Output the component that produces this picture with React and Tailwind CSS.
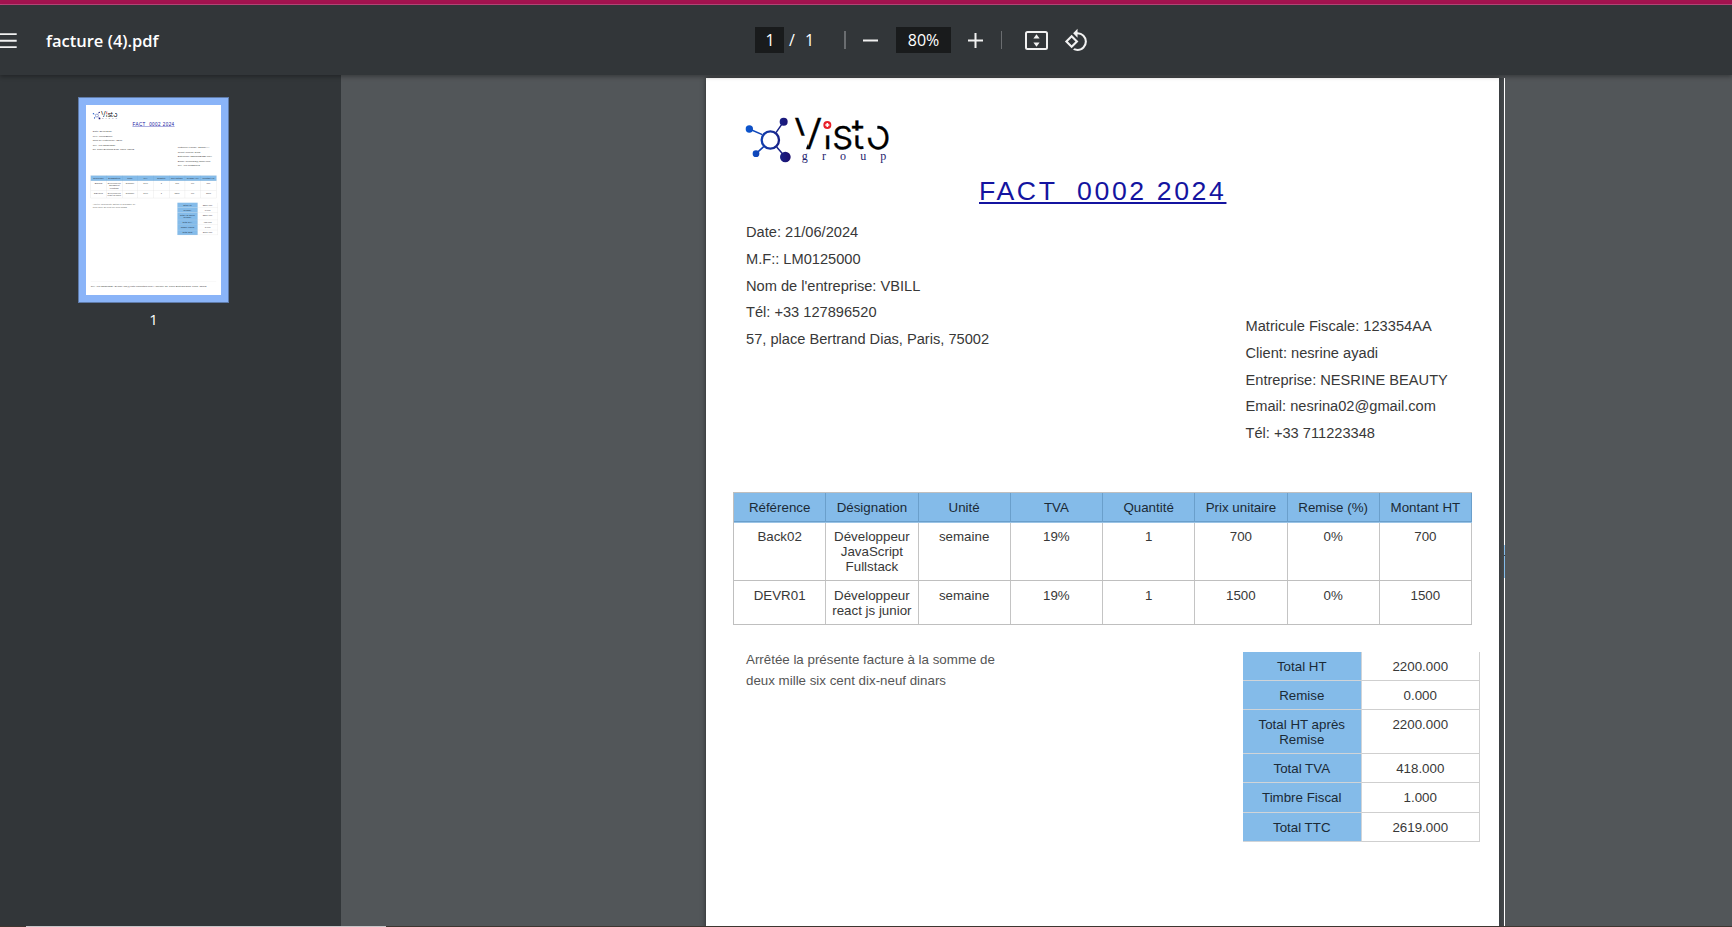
import React from "react";

const HEADERS = ["Référence", "Désignation", "Unité", "TVA", "Quantité", "Prix unitaire", "Remise (%)", "Montant HT"];
const ROWS = [
  ["Back02", "Développeur JavaScript Fullstack", "semaine", "19%", "1", "700", "0%", "700"],
  ["DEVR01", "Développeur react js junior", "semaine", "19%", "1", "1500", "0%", "1500"],
];
const TOTALS = [
  ["Total HT", "2200.000", "h-[29px]"],
  ["Remise", "0.000", "h-[29px]"],
  ["Total HT après Remise", "2200.000", "h-[44px]"],
  ["Total TVA", "418.000", "h-[29px]"],
  ["Timbre Fiscal", "1.000", "h-[30px]"],
  ["Total TTC", "2619.000", "h-[29px]"],
];

function Logo() {
  return (
    <svg className="block h-[50px] w-[150px] overflow-visible" viewBox="130 135 450 150">
      <defs>
        <linearGradient id="net" x1="138" y1="0" x2="272" y2="0" gradientUnits="userSpaceOnUse">
          <stop offset="0" stopColor="#0b57d0" />
          <stop offset="1" stopColor="#1d0f6e" />
        </linearGradient>
      </defs>
      <g transform="translate(1 0)">
        <g stroke="url(#net)" strokeWidth="4.5" fill="none">
          <path d="M148 177L187 194M168 251L191 230M251 155L228 188M256 261L230 231" />
          <circle cx="211" cy="210" r="26" strokeWidth="7" />
        </g>
        <g fill="url(#net)">
          <circle cx="148" cy="177" r="11" />
          <circle cx="168" cy="251" r="10" />
          <circle cx="251" cy="155" r="12" />
          <circle cx="256" cy="261" r="16" />
        </g>
      </g>
      <text x="283 369 396 456 498" y="237" fontFamily="Inter, sans-serif" fontWeight="300" fontSize="126" fill="#000" stroke="#000" strokeWidth="1">Visto</text>
      <g fill="#fff">
        <path d="M294 197H334L317 241H294Z" />
        <path d="M372 138H394V196H372Z" />
        <path d="M464 182H490V196H464Z" />
        <path d="M497 158H533V203H497Z" />
      </g>
      <circle cx="383" cy="165" r="12" fill="#e8202a" />
      <path d="M377 165H389M383 159V171" stroke="#fff" strokeWidth="5" />
      <text x="306 367 421 482 542" y="270" fontFamily="Liberation Serif, serif" fontSize="36" fill="#24246e">group</text>
    </svg>
  );
}

function Invoice() {
  return (
    <div className="flex h-[1120px] w-[793px] flex-col bg-white font-['Liberation_Sans',Arial,sans-serif] text-[13.33px] text-[#383838]">
      <div className="pl-[37px] pt-[37px]"><Logo /></div>
      <div className="pl-[273px] pt-[8px]">
        <h1 className="w-fit whitespace-pre text-[26.67px] leading-[36px] tracking-[2.6px] text-[#1414a0] underline decoration-[1.6px] underline-offset-[2px] [text-decoration-skip-ink:none]">{"FACT  0002 2024"}</h1>
      </div>
      <div className="flex h-[279px] justify-between pl-[40px] pr-[50px] pt-[10px] text-[14.64px] leading-[26.8px]">
        <div>
          <p>Date: 21/06/2024</p>
          <p>M.F:: LM0125000</p>
          <p>Nom de l'entreprise: VBILL</p>
          <p>Tél: +33 127896520</p>
          <p>57, place Bertrand Dias, Paris, 75002</p>
        </div>
        <div className="w-[203.5px] whitespace-nowrap pt-[94px]">
          <p>Matricule Fiscale: 123354AA</p>
          <p>Client: nesrine ayadi</p>
          <p>Entreprise: NESRINE BEAUTY</p>
          <p>Email: nesrina02@gmail.com</p>
          <p>Tél: +33 711223348</p>
        </div>
      </div>
      <div className="ml-[27px] mt-[4px] w-[739px] border-l border-t border-[#bfbfbf] text-center leading-[15px]">
        <div className="grid h-[30px] grid-cols-8 border-b border-[#9bc4e6] bg-[#84bbe9] text-[#1b2a36]">
          {HEADERS.map((h) => (
            <div key={h} className="whitespace-nowrap border-b border-r border-[#6a9fcb] pt-[7px]">{h}</div>
          ))}
        </div>
        <div className="grid h-[58px] grid-cols-8 border-b border-[#bfbfbf]">
          {ROWS[0].map((c, j) => (
            <div key={j} className="border-r border-[#c4c4c4] px-[6px] pt-[6px]">{c}</div>
          ))}
        </div>
        <div className="grid h-[44px] grid-cols-8 border-b border-[#bfbfbf]">
          {ROWS[1].map((c, j) => (
            <div key={j} className="border-r border-[#c4c4c4] px-[6px] pt-[7px]">{c}</div>
          ))}
        </div>
      </div>
      <div className="flex justify-between pl-[40px] pr-[19px] pt-[27px]">
        <div className="-mt-[3px] w-[260px] whitespace-nowrap leading-[21.3px] text-[#555]">
          <p>Arrêtée la présente facture à la somme de</p>
          <p>deux mille six cent dix-neuf dinars</p>
        </div>
        <div className="w-[237px] text-center leading-[15px]">
          {TOTALS.map(([a, b, h]) => (
            <div key={a} className={"grid grid-cols-2 " + h}>
              <div className="border-b border-r border-[#d0d4d8] bg-[#84bbe9] px-3 pt-[7px] text-[#1b2a36]">{a}</div>
              <div className="border-b border-r border-[#cfcfcf] pt-[7px]">{b}</div>
            </div>
          ))}
        </div>
      </div>
      <div className="mx-[28px] mt-auto mb-[44px] whitespace-nowrap border-t border-[#ddd] pt-[18px] text-[14.64px]">
        Tél: +33 127896520 | E-mail: info@visto-consulting.com | Adresse: 57, place Bertrand Dias, Paris, 75002
      </div>
    </div>
  );
}

function Toolbar() {
  return (
    <header className="relative z-10 flex h-[70px] shrink-0 items-center bg-[#323639] text-white shadow-[0_2px_4px_rgba(0,0,0,0.3)]">
      <svg className="h-[20px] w-[17px]" viewBox="0 0 17 20"><path d="M0 4.1H16.7M0 10.7H16.7M0 17.1H16.7" stroke="#f1f1f1" strokeWidth="1.9" /></svg>
      <div className="ml-[29px] w-[709px] pt-[3px] text-[16.5px] font-semibold">facture (4).pdf</div>
      <div className="flex h-[26px] w-[29px] items-center justify-center bg-[#191b1c] pl-px text-[16px]">1</div>
      <div className="ml-[5px] w-[7px] text-[16px]">/</div>
      <div className="ml-[9px] w-[39px] text-[16px]">1</div>
      <div className="h-[18px] w-[2px] bg-[#6a6d70]" />
      <svg className="ml-[17px] h-[15px] w-[15px]" viewBox="0 0 15 15"><path d="M0 7.5H15" stroke="#f1f1f1" strokeWidth="2" /></svg>
      <div className="ml-[18px] flex h-[26px] w-[55px] items-center justify-center bg-[#191b1c] text-[16px]">80%</div>
      <svg className="ml-[17px] h-[15px] w-[15px]" viewBox="0 0 15 15"><path d="M0 7.5H15M7.5 0V15" stroke="#f1f1f1" strokeWidth="2" /></svg>
      <div className="ml-[18px] h-[18px] w-px bg-[#6a6d70]" />
      <svg className="ml-[23px] h-[19px] w-[23px]" viewBox="0 0 23 19">
        <rect x="1" y="1" width="21" height="17" rx="1.5" fill="none" stroke="#f1f1f1" strokeWidth="2" />
        <path d="M11.5 3.2L14.6 7.4H8.4ZM11.5 15.8L14.6 11.6H8.4Z" fill="#f1f1f1" />
      </svg>
      <svg className="ml-[16px] h-[25px] w-[25px]" viewBox="0 0 24 24" fill="#f1f1f1">
        <path d="M7.34 6.41L.86 12.9l6.49 6.48 6.49-6.48-6.5-6.49zM3.69 12.9l3.66-3.66L11 12.9l-3.66 3.66-3.65-3.66zm15.67-6.26A8.95 8.95 0 0 0 13 4V.76L8.76 5 13 9.24V6c1.79 0 3.58.68 4.95 2.05a7.007 7.007 0 0 1 0 9.9 6.973 6.973 0 0 1-7.79 1.44l-1.49 1.49C10.02 21.62 11.51 22 13 22c2.3 0 4.61-.88 6.36-2.64a8.98 8.98 0 0 0 0-12.72z" />
      </svg>
    </header>
  );
}

export default function App() {
  return (
    <div className="flex h-[927px] w-[1732px] flex-col overflow-hidden bg-[#525659] font-['Open_Sans','Noto_Sans',sans-serif]">
      <div className="h-[5px] shrink-0 border-b border-[#b8477a] bg-[#a3134f]" />
      <Toolbar />
      <div className="flex h-[851px] overflow-hidden">
        <aside className="flex w-[341px] shrink-0 flex-col items-start bg-[#323639] pl-[78px] pt-[22px] text-white">
          <div className="h-[206px] w-[151px] border border-[#5f7ba9] bg-[#8ab4f8] p-[7px]">
            <div className="h-[190px] w-[135px] overflow-hidden bg-white">
              <div className="origin-top-left scale-[0.1702]"><Invoice /></div>
            </div>
          </div>
          <div className="w-[151px] pt-[5px] text-center text-[15px]">1</div>
        </aside>
        <main className="flex h-[851px] overflow-hidden pl-[365px] pt-[3px]">
          <div className="h-[1120px] shrink-0 shadow-[0_0_5px_rgba(0,0,0,0.5)]"><Invoice /></div>
          <div className="h-full w-[5px] shrink-0 bg-gradient-to-r from-[#3a3e41] to-[#45494c]" />
          <div className="flex h-full w-px shrink-0 flex-col bg-white pt-[467px]">
            <div className="h-[10px] shrink-0 bg-[#84bbe9]" />
            <div className="h-px shrink-0 bg-[#2d4356]" />
            <div className="h-[22px] shrink-0 bg-[#84bbe9]" />
          </div>
        </main>
      </div>
      <div className="flex h-px shrink-0 bg-[#3e3631]">
        <div className="ml-[26px] w-[360px] bg-[#c9c5c8]" />
      </div>
    </div>
  );
}
